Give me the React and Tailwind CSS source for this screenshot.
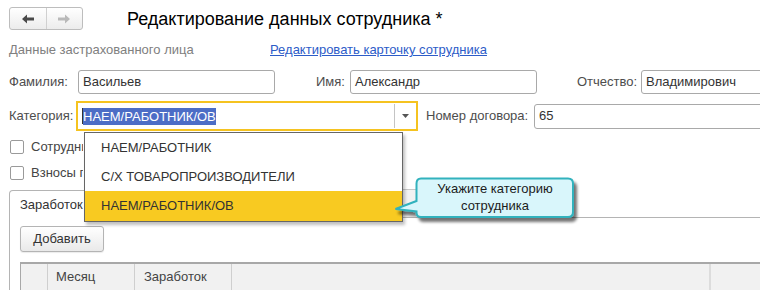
import React from "react";

function Arrow({ dir = "left", color }) {
  return (
    <svg width="12" height="10" viewBox="0 0 12 10" style={{ transform: dir === "right" ? "scaleX(-1)" : undefined }}>
      <path d="M0 5 L5 0.5 V3.5 H12 V6.5 H5 V9.5 Z" fill={color} />
    </svg>
  );
}

function Input({ value, className = "" }) {
  return (
    <div className={`h-[24px] shrink-0 border border-[#a9a9a9] rounded-[3px] bg-white flex items-center px-[4px] text-[#333] whitespace-nowrap overflow-hidden ${className}`}>
      {value}
    </div>
  );
}

function Checkbox({ label }) {
  return (
    <div className="flex items-center h-[16px] ml-[10px]">
      <div className="w-[14px] h-[14px] shrink-0 border border-[#9a9a9a] rounded-[2px] bg-white" />
      <span className="ml-[7px] w-[52px] overflow-hidden text-[#444] whitespace-nowrap">{label}</span>
    </div>
  );
}

export default function App() {
  return (
    <div className="relative w-[760px] h-[290px] overflow-hidden bg-white font-['Liberation_Sans',Arial,sans-serif] text-[13px] leading-[16px] text-[#333]">
      {/* header */}
      <div className="flex items-center h-[23px] mt-[7px] ml-[9px]">
        <div className="flex w-[74px] h-[23px] shrink-0 border border-[#bdbdbd] rounded-[3px] bg-gradient-to-b from-white to-[#ececec]">
          <div className="flex-1 flex items-center justify-center border-r border-[#d0d0d0]">
            <Arrow dir="left" color="#4a4a4a" />
          </div>
          <div className="flex-1 flex items-center justify-center">
            <Arrow dir="right" color="#b9b9b9" />
          </div>
        </div>
        <div className="ml-[44px] text-[18px] leading-[22px] text-black whitespace-nowrap">
          Редактирование данных сотрудника *
        </div>
      </div>

      {/* subtitle */}
      <div className="flex mt-[12px] ml-[9px] h-[16px] items-center whitespace-nowrap">
        <span className="w-[261px] shrink-0 text-[#808080]">Данные застрахованного лица</span>
        <span className="text-[#2d5cc8] underline">Редактировать карточку сотрудника</span>
      </div>

      {/* row 1 */}
      <div className="flex items-center mt-[12px] ml-[9px] h-[24px] whitespace-nowrap">
        <span className="w-[69px] shrink-0 text-[#4d4d4d]">Фамилия:</span>
        <Input value="Васильев" className="w-[197px]" />
        <span className="ml-[41px] w-[34px] shrink-0 text-[#4d4d4d]">Имя:</span>
        <Input value="Александр" className="w-[187px]" />
        <span className="ml-[40px] w-[64px] shrink-0 text-[#4d4d4d]">Отчество:</span>
        <Input value="Владимирович" className="w-[140px]" />
      </div>

      {/* row 2 */}
      <div className="flex items-center mt-[7px] ml-[9px] h-[30px] whitespace-nowrap">
        <span className="w-[67px] shrink-0 text-[#4d4d4d]">Категория:</span>
        <div className="w-[342px] h-[30px] border-2 border-[#f5c320] flex items-center bg-white shrink-0">
          <div className="flex-1 flex items-center pl-[4px]">
            <div className="w-px h-[16px] bg-[#333]" />
            <span className="bg-[#4c6dc6] text-white leading-[17px]">НАЕМ/РАБОТНИК/ОВ</span>
          </div>
          <div className="w-px h-[24px] bg-[#c4c4c4]" />
          <div className="w-[21px] flex items-center justify-center">
            <svg width="7" height="4" viewBox="0 0 7 4"><path d="M0 0 H7 L3.5 4 Z" fill="#555" /></svg>
          </div>
        </div>
        <span className="ml-[8px] w-[108px] shrink-0 text-[#4d4d4d]">Номер договора:</span>
        <Input value="65" className="w-[240px] h-[25px]" />
      </div>

      {/* checkboxes */}
      <div className="mt-[8px]">
        <Checkbox label="Сотрудник является иностранным гражданином" />
      </div>
      <div className="mt-[10px]">
        <Checkbox label="Взносы по дополнительному тарифу" />
      </div>

      {/* tabs */}
      <div className="flex items-end mt-[9px] ml-[9px] h-[28px]">
        <div className="w-[90px] h-[28px] border-l border-t border-r border-[#b4b4b4] rounded-tl-[4px] bg-white flex items-center pl-[10px] shrink-0">
          <span className="text-[#333]">Заработок</span>
        </div>
        <div className="flex-1 h-[28px] flex items-end border-b border-[#b4b4b4]">
          <div className="ml-[170px] w-[150px] h-[28px] border-t border-r border-[#c8c8c8] bg-[#f2f2f2] flex items-center justify-end pr-[24px] shrink-0">
            <span className="text-[#555]">Страховой стаж</span>
          </div>
        </div>
      </div>

      {/* panel */}
      <div className="ml-[9px] border-l border-[#b4b4b4] h-[80px] pl-[10px] pt-[8px]">
        <div className="w-[84px] h-[26px] border border-[#b4b4b4] rounded-[3px] bg-gradient-to-b from-white to-[#e9e9e9] flex items-center justify-center text-[#333] shadow-[0_1px_1px_rgba(0,0,0,0.08)]">
          Добавить
        </div>
        <div className="mt-[10px] h-[40px] border-t-2 border-l border-[#a8a8a8] bg-[#f1f1f1] flex">
          <div className="w-[27px] border-r border-[#cfcfcf]" />
          <div className="w-[87px] border-r border-[#cfcfcf] pl-[8px] pt-[5px] text-[#444]">Месяц</div>
          <div className="w-[97px] border-r border-[#cfcfcf] pl-[9px] pt-[5px] text-[#444]">Заработок</div>
          <div className="w-[479px] border-r-2 border-[#dcdcdc]" />
          <div className="flex-1" />
        </div>
      </div>

      {/* dropdown list */}
      <div className="absolute left-[84px] top-[132px] w-[319px] h-[90px] border border-[#666] bg-white shadow-[2px_3px_3px_rgba(0,0,0,0.25)] text-[#333]">
        <div className="h-[29px] flex items-center pl-[16px]">НАЕМ/РАБОТНИК</div>
        <div className="h-[29px] flex items-center pl-[16px]">С/Х ТОВАРОПРОИЗВОДИТЕЛИ</div>
        <div className="h-[30px] flex items-center pl-[16px] bg-[#f8ca21]">НАЕМ/РАБОТНИК/ОВ</div>
      </div>

      {/* tooltip */}
      <div className="absolute left-[390px] top-[174px] w-[192px] h-[52px]">
        <svg width="192" height="52" viewBox="0 0 192 52" className="absolute left-0 top-0">
          <defs>
            <filter id="sh" x="-10%" y="-20%" width="130%" height="160%">
              <feGaussianBlur in="SourceAlpha" stdDeviation="1.8" />
              <feOffset dx="3" dy="4" result="o" />
              <feComponentTransfer><feFuncA type="linear" slope="0.55" /></feComponentTransfer>
              <feMerge><feMergeNode /><feMergeNode in="SourceGraphic" /></feMerge>
            </filter>
          </defs>
          <path
            d="M31 4.5 H178 Q183 4.5 183 9.5 V38 Q183 43 178 43 H31 Q26.5 43 26.5 38.5 V37.5 L5.5 35 L26.5 27 V9.5 Q26.5 4.5 31 4.5 Z"
            fill="#d9f6fb"
            stroke="#30b2bd"
            strokeWidth="2"
            filter="url(#sh)"
          />
        </svg>
        <div className="absolute left-[27px] top-[6px] w-[156px] text-center text-[#1c1c1c] leading-[17px]">
          Укажите категорию
          <br />
          сотрудника
        </div>
      </div>
    </div>
  );
}
